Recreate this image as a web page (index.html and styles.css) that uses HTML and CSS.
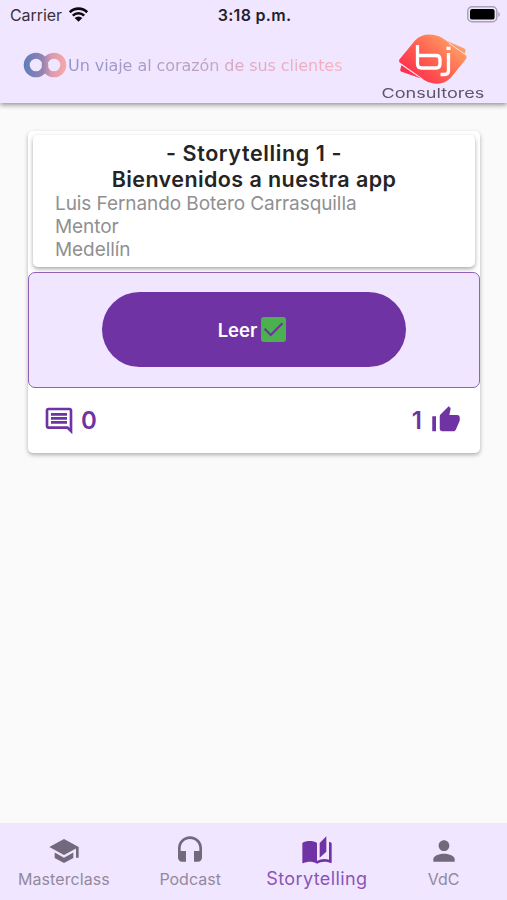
FILE: index.html
```html
<!DOCTYPE html>
<html lang="es">
<head>
<meta charset="utf-8">
<title>Storytelling</title>
<link rel="stylesheet" href="styles.css">
</head>
<body>
<div class="app">
  <header class="header">
    <div class="status">
      <div class="carrier"><span class="carrier-name">Carrier</span>
        <svg class="wifi" viewBox="0 0 20 15"><path d="M1.3 5.2a12.4 12.4 0 0 1 17.4 0M4.3 8.6a8.1 8.1 0 0 1 11.4 0" fill="none" stroke="#0b0810" stroke-width="2.6"/><path d="M6.2 11a5.4 5.4 0 0 1 7.6 0L10 14.8z" fill="#0b0810"/></svg>
      </div>
      <div class="time">3:18 p.m.</div>
      <svg class="battery" viewBox="0 0 33 17"><rect x=".8" y=".8" width="29" height="15" rx="4.3" fill="none" stroke="#aaa2b2" stroke-width="1.5"/><rect x="3" y="3" width="24.6" height="10.6" rx="2.2" fill="#000"/><path d="M31.3 6v5c2-.9 2-4.100 0-5z" fill="#aaa2b2"/></svg>
    </div>
    <div class="brand">
      <div class="tagline">
        <svg class="rings" viewBox="0 0 44 26">
          <defs><linearGradient id="ring" gradientUnits="userSpaceOnUse" x1="0" y1="0" x2="44" y2="0"><stop offset="0" stop-color="#5c7dbb"/><stop offset=".45" stop-color="#9583b2"/><stop offset=".65" stop-color="#dc9bb0"/><stop offset="1" stop-color="#faa8a8"/></linearGradient></defs>
          <g fill="none" stroke="url(#ring)" stroke-width="6"><circle cx="31" cy="13" r="9.300"/><circle cx="13" cy="13" r="9.300"/></g>
        </svg>
        <span class="tagline-text">Un viaje al corazón de sus clientes</span>
      </div>
      <div class="logo">
        <svg class="mark" viewBox="0 0 68 51">
          <defs><linearGradient id="fire" gradientUnits="userSpaceOnUse" x1="14" y1="48" x2="54" y2="4"><stop offset="0" stop-color="#ff2b4d"/><stop offset=".5" stop-color="#ff6250"/><stop offset="1" stop-color="#ffa266"/></linearGradient></defs>
          <path d="M48 7L65.500 14.500Q67 15.500 66.500 17L65.500 20zM2.500 31L22 44.500 2 37.500Q1 37 1.300 35.500z" fill="url(#fire)"/>
          <path d="M.8 25L16 6.500Q25-2.500 40 2.200Q43 3.300 46 5.800L66 20.500Q68.500 22.500 67 25L52 43.500Q43 53 29 48Q25 46.500 22 43.500L1.500 29Q-1 27.500.8 25z" fill="url(#fire)"/>
          <path d="M50 9.300L66 20.300M2 30.300L19 42" stroke="#f9dce8" stroke-width=".9"/>
          <path d="M18.500 11V30Q18.500 34 22.500 34H37Q41 34 41 30V25.500Q41 21.500 37 21.500H19M49.500 19V36.500Q49.500 40.500 45.500 40.500H41.500M47.500 14.300H51.500" fill="none" stroke="#fff" stroke-width="3.300"/>
        </svg>
        <span class="logo-text">Consultores</span>
      </div>
    </div>
  </header>

  <main class="content">
    <article class="card">
      <section class="info">
        <h1><span class="title-one">- Storytelling 1 -</span><br><span class="title-two">Bienvenidos a nuestra app</span></h1>
        <p class="author">Luis Fernando Botero Carrasquilla</p>
        <p class="role">Mentor</p>
        <p class="city">Medellín</p>
      </section>
      <section class="action">
        <button class="read"><span>Leer</span><svg class="check" viewBox="3 3 18 18"><path fill="#4caf50" d="M19 3H5a2 2 0 0 0-2 2v14a2 2 0 0 0 2 2h14a2 2 0 0 0 2-2V5a2 2 0 0 0-2-2zm-9 14l-5-5 1.100-1.100L10 14.800l7.900-7.900 1.100 1.100z"/></svg></button>
      </section>
      <footer class="stats">
        <div class="stat"><svg class="icon" viewBox="0 0 24 24"><path d="M21.990 4c0-1.100-.89-2-1.990-2H4c-1.100 0-2 .9-2 2v12c0 1.100.9 2 2 2h14l4 4-.01-18zM20 4v13.170L18.830 16H4V4h16zM6 12h12v2H6zm0-3h12v2H6zm0-3h12v2H6z"/></svg><span>0</span></div>
        <div class="stat likes"><span>1</span><svg class="icon thumb" viewBox="0 0 24 24"><path d="M1 21h3V9H1v12zm22-11c0-1.100-.9-2-2-2h-6.310l.95-4.570.03-.32c0-.41-.17-.79-.44-1.060L14.170 1 7.590 7.590C7.220 7.950 7 8.450 7 9v10c0 1.100.9 2 2 2h9c.83 0 1.540-.5 1.840-1.220l3.020-7.050c.09-.23.14-.47.14-.73v-2z"/></svg></div>
      </footer>
    </article>
  </main>

  <nav class="nav">
    <a class="tab"><svg class="icon school" viewBox="0 0 24 24"><path d="M5 13.180v4L12 21l7-3.820v-4L12 17l-7-3.820zM12 3L1 9l11 6 9-4.910V17h2V9L12 3z"/></svg><span class="l-master">Masterclass</span></a>
    <a class="tab"><svg class="icon phones" viewBox="0 0 24 24"><path d="M12 1a9 9 0 0 0-9 9v7c0 1.660 1.340 3 3 3h3v-8H5v-2c0-3.870 3.130-7 7-7s7 3.130 7 7v2h-4v8h3c1.660 0 3-1.340 3-3v-7a9 9 0 0 0-9-9z"/></svg><span class="l-pod">Podcast</span></a>
    <a class="tab active"><svg class="icon" viewBox="0 0 24 24"><path d="M19 1l-5 5v11l5-4.500V1zM1 6v14.650c0 .25.25.5.5.5.1 0 .15-.05.25-.05C3.100 20.450 5.050 20 6.500 20c1.950 0 4.050.4 5.500 1.500V6c-1.450-1.100-3.550-1.500-5.500-1.500S2.450 4.900 1 6zm22 13.500V6c-.6-.45-1.250-.75-2-1v13.500c-1.100-.35-2.300-.5-3.500-.5-1.700 0-4.150.65-5.500 1.500v2c1.350-.85 3.800-1.500 5.500-1.500 1.650 0 3.350.3 4.750 1.050.1.050.15.050.25.050.25 0 .5-.25.5-.5v-1.100z"/></svg><span class="l-story">Storytelling</span></a>
    <a class="tab"><svg class="icon" viewBox="0 0 24 24"><path d="M12 12c2.210 0 4-1.790 4-4s-1.790-4-4-4-4 1.790-4 4 1.790 4 4 4zm0 2c-2.670 0-8 1.340-8 4v2h16v-2c0-2.660-5.330-4-8-4z"/></svg><span class="l-vdc">VdC</span></a>
  </nav>
</div>
</body>
</html>
```
FILE: styles.css
```css
* { box-sizing: border-box; margin: 0; padding: 0; }
body { font-family: Inter, sans-serif; background: #fafafa; color: #212121; }
svg { display: block; flex: none; }
span, h1, p { white-space: nowrap; }
.app { height: 900px; display: flex; flex-direction: column; overflow: hidden; }

.header { height: 103px; flex: none; background: #f0e6ff; box-shadow: 0 2px 5px rgba(0,0,0,.42); }
.status { height: 30px; display: grid; grid-template-columns: 1fr auto 1fr; align-items: center; padding: 0 7px 0 10px; }
.carrier { display: flex; gap: 6px; align-items: center; font-size: 16px; color: #37313e; }
.carrier-name { letter-spacing: -.08px; }
.wifi { width: 21px; height: 15px; margin-top: -2px; }
.time { font-size: 16px; font-weight: 600; line-height: 30px; letter-spacing: .3px; margin-right: 1px; color: #241f2b; }
.battery { width: 33px; height: 17px; justify-self: end; margin-top: -2px; }
.brand { display: flex; justify-content: space-between; padding: 0 22px 0 23px; }
.tagline { display: flex; align-items: center; height: 70px; }
.rings { width: 44px; height: 26px; }
.tagline-text { font-family: "DejaVu Sans", sans-serif; font-size: 16px; line-height: 24px; letter-spacing: -.07px; margin: 1px 0 0 1px; background: linear-gradient(90deg, #8f94c8, #bba0c4 45%, #dea8c2 65%, #f6b2bf); -webkit-background-clip: text; background-clip: text; color: transparent; }
.logo { width: 104px; display: flex; flex-direction: column; align-items: center; padding-top: 4px; }
.mark { width: 68px; height: 51px; }
.logo-text { font-size: 13px; line-height: 15px; color: #5d5669; transform: scaleX(1.39); margin-top: 1px; }

.content { flex: 1; padding: 28px 27px 0 28px; }
.card { height: 322px; border-radius: 5px; background: #fff; box-shadow: 0 2px 4px rgba(0,0,0,.3); padding-top: 4px; }
.info { height: 132px; margin: 0 5px; border-radius: 5px; box-shadow: 0 2px 4px rgba(0,0,0,.34); padding: 6px 22px; }
h1 { font-size: 21.500px; line-height: 25.500px; font-weight: 600; text-align: center; color: #242424; }
.title-one { letter-spacing: .6px; }
.title-two { letter-spacing: .42px; }
.info p { font-size: 19px; line-height: 23px; color: #909090; letter-spacing: -.08px; }
.action { height: 116px; margin-top: 5px; border: 1px solid #9160b7; border-radius: 7px; background: #f0e6ff; padding-top: 19px; }
.read { display: flex; align-items: center; justify-content: center; gap: 4px; width: 304px; height: 75px; margin: 0 auto; border: 0; padding-right: 4px; border-radius: 38px; background: #7033a3; color: #fff; font: 600 18.500px Inter, sans-serif; }
.check { width: 25px; height: 25px; }
.stats { display: flex; justify-content: space-between; height: 65px; align-items: center; padding: 0 19px 0 15px; color: #7033a3; font-size: 24px; font-weight: 600; }
.stat { display: flex; align-items: center; gap: 6px; }
.likes { gap: 9px; }
.icon { width: 32px; height: 32px; fill: currentColor; }
.icon.thumb { width: 30px; height: 30px; margin-top: -2px; }

.nav { height: 77px; flex: none; display: grid; grid-template-columns: repeat(4, 1fr); background: #f0e6ff; }
.tab { display: flex; flex-direction: column; align-items: center; padding-top: 12px; color: #73697d; }
.icon.school { margin-left: 2px; }
.tab span { font-size: 16px; line-height: 24px; color: #93899e; }
.tab .l-master { letter-spacing: .08px; margin-left: 1px; }
.tab.active { color: #7033a3; }
.tab.active span { font-size: 18px; line-height: 23px; letter-spacing: .4px; color: #8955ba; }
```
